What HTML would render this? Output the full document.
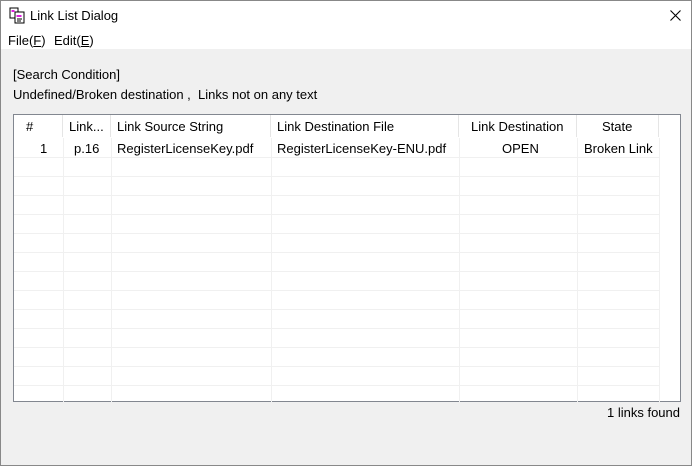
<!DOCTYPE html>
<html><head><style>
*{margin:0;padding:0;box-sizing:border-box}
body{width:692px;height:466px;background:#f0f0f0;font-family:"Liberation Sans","Noto Sans CJK JP",sans-serif;font-size:13px;color:#000;position:relative;overflow:hidden}
.win{position:absolute;left:0;top:0;width:692px;height:466px;border:1px solid #888}
.title{position:absolute;left:1px;top:1px;width:690px;height:29px;background:#fff}
.menu{position:absolute;left:1px;top:30px;width:690px;height:19px;background:#fff}
.t{position:absolute;white-space:nowrap}
.box{position:absolute;left:13px;top:114px;width:668px;height:288px;background:#fff;border:1px solid #828790}
.h{position:absolute;background:#f0f0f0;height:1px}
.v{position:absolute;background:#f0f0f0;width:1px}
</style></head><body>
<div class="win"></div>
<div class="title"></div>
<svg style="position:absolute;left:9px;top:7px" width="18" height="18" viewBox="0 0 18 18">
<rect x="1" y="1" width="8" height="10" fill="#fff" stroke="#000"/>
<rect x="2.5" y="3" width="3" height="2" fill="#e020e0"/>
<rect x="6" y="5" width="9" height="11" fill="#fff" stroke="#000"/>
<rect x="7.5" y="8" width="5" height="2" fill="#e020e0"/>
<path d="M8 12h5M8 14h4" stroke="#000"/>
</svg>
<div class="t" style="left:30px;top:8px">Link List Dialog</div>
<svg style="position:absolute;left:670px;top:10px" width="11" height="11"><path d="M0.5 0.5L10.5 10.5M10.5 0.5L0.5 10.5" stroke="#000" stroke-width="1.1"/></svg>
<div class="menu"></div>
<div class="t" style="left:8px;top:33px">File(<u>F</u>)</div>
<div class="t" style="left:54px;top:33px">Edit(<u>E</u>)</div>
<div class="t" style="left:13px;top:67px">[Search Condition]</div>
<div class="t" style="left:13px;top:87px">Undefined/Broken destination ,&nbsp; Links not on any text</div>
<div class="box">
<div class="h" style="left:0;width:646px;top:42px"></div>
<div class="h" style="left:0;width:646px;top:61px"></div>
<div class="h" style="left:0;width:646px;top:80px"></div>
<div class="h" style="left:0;width:646px;top:99px"></div>
<div class="h" style="left:0;width:646px;top:118px"></div>
<div class="h" style="left:0;width:646px;top:137px"></div>
<div class="h" style="left:0;width:646px;top:156px"></div>
<div class="h" style="left:0;width:646px;top:175px"></div>
<div class="h" style="left:0;width:646px;top:194px"></div>
<div class="h" style="left:0;width:646px;top:213px"></div>
<div class="h" style="left:0;width:646px;top:232px"></div>
<div class="h" style="left:0;width:646px;top:251px"></div>
<div class="h" style="left:0;width:646px;top:270px"></div>
<div class="v" style="left:49px;top:0;height:288px"></div>
<div class="v" style="left:97px;top:0;height:288px"></div>
<div class="v" style="left:257px;top:0;height:288px"></div>
<div class="v" style="left:445px;top:0;height:288px"></div>
<div class="v" style="left:563px;top:0;height:288px"></div>
<div class="v" style="left:645px;top:0;height:288px"></div>
<div style="position:absolute;left:0;top:0;width:666px;height:23px;background:#fff"></div>
<div class="v" style="left:48px;top:0;height:22px;background:#e5e5e5"></div>
<div class="v" style="left:96px;top:0;height:22px;background:#e5e5e5"></div>
<div class="v" style="left:256px;top:0;height:22px;background:#e5e5e5"></div>
<div class="v" style="left:444px;top:0;height:22px;background:#e5e5e5"></div>
<div class="v" style="left:562px;top:0;height:22px;background:#e5e5e5"></div>
<div class="v" style="left:644px;top:0;height:22px;background:#e5e5e5"></div>
</div>
<div class="t" style="left:26px;top:119px">#</div>
<div class="t" style="left:69px;top:119px">Link...</div>
<div class="t" style="left:117px;top:119px">Link Source String</div>
<div class="t" style="left:277px;top:119px">Link Destination File</div>
<div class="t" style="left:471px;top:119px">Link Destination</div>
<div class="t" style="left:602px;top:119px">State</div>
<div class="t" style="left:40px;top:141px">1</div>
<div class="t" style="left:74px;top:141px">p.16</div>
<div class="t" style="left:117px;top:141px">RegisterLicenseKey.pdf</div>
<div class="t" style="left:277px;top:141px">RegisterLicenseKey-ENU.pdf</div>
<div class="t" style="left:502px;top:141px">OPEN</div>
<div class="t" style="left:584px;top:141px">Broken Link</div>
<div class="t" style="right:12px;top:405px">1 links found</div>
</body></html>
